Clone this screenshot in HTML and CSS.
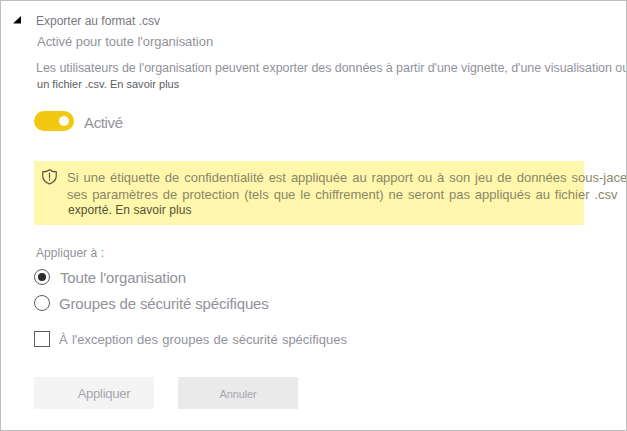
FILE: index.html
```html
<!DOCTYPE html>
<html lang="fr">
<head>
<meta charset="utf-8">
<title>Exporter au format .csv</title>
<link rel="stylesheet" href="styles.css">
</head>
<body>
<main class="panel">
  <header class="heading">
    <svg class="caret" width="8" height="8" viewBox="0 0 8 8"><path d="M8 0V7.500H.5V7Z" fill="#000"/></svg>
    <span class="title">Exporter au format .csv</span>
  </header>
  <p class="status"><span>Activé pour toute l'organisation</span></p>
  <p class="description"><span>Les utilisateurs de l'organisation peuvent exporter des données à partir d'une vignette, d'une visualisation ou</span></p>
  <p class="more"><span>un fichier .csv. En savoir plus</span></p>
  <div class="toggle-row">
    <div class="toggle"><i class="knob"></i></div>
    <span class="toggle-label">Activé</span>
  </div>
  <section class="notice">
    <svg class="shield" width="15" height="16" viewBox="0 0 16 17" fill="none" stroke="#4e4b3c" stroke-width="1.200"><path d="M8 .8C6 2.400 3.500 3 .8 3V7.500C.8 11.500 4 14.500 8 16C12 14.500 15.200 11.500 15.200 7.500V3C12.500 3 10 2.400 8 .8Z"/><path d="M8 4V10M8 11V12.300"/></svg>
    <div class="notice-text">
      <p class="n1"><span>Si une étiquette de confidentialité est appliquée au rapport ou à son jeu de données sous-jace</span></p>
      <p class="n2"><span>ses paramètres de protection (tels que le chiffrement) ne seront pas appliqués au fichier .csv</span></p>
      <p class="n3"><span>exporté. En savoir plus</span></p>
    </div>
  </section>
  <p class="apply-to"><span>Appliquer à :</span></p>
  <div class="option"><i class="radio checked"></i><span class="o1">Toute l'organisation</span></div>
  <div class="option second"><i class="radio"></i><span class="o2">Groupes de sécurité spécifiques</span></div>
  <div class="option except"><i class="checkbox"></i><span class="o3">À l'exception des groupes de sécurité spécifiques</span></div>
  <footer class="actions">
    <div class="button apply"><span>Appliquer</span></div>
    <div class="button cancel"><span>Annuler</span></div>
  </footer>
</main>
</body>
</html>
```
FILE: styles.css
```css
* { box-sizing: border-box; }
body { margin: 0; font-family: "Liberation Sans", Arial, sans-serif; background: #fff; }
p { margin: 0; }
.panel { width: 627px; height: 431px; overflow: hidden; border: 1px solid #bebebe; padding: 12px 0 0 33px; color: #92929a; font-size: 13px; line-height: 16px; white-space: nowrap; }
.heading { display: flex; height: 16px; margin-left: -21.5px; color: #77777f; font-size: 12px; }
.caret { margin: 3px 15.5px 0 0; }
.status { margin: 5px 0 0 3px; letter-spacing: -.04px; }
.description { margin: 10px 0 0 2px; font-size: 12.5px; letter-spacing: -.055px; }
.more { margin-left: 3px; font-size: 11px; letter-spacing: .02px; color: #5b5b60; }
.toggle-row { display: flex; align-items: center; height: 20px; margin-top: 19px; }
.toggle { width: 40px; height: 20px; border-radius: 10px; background: #f2c811; padding: 5px; display: flex; justify-content: flex-end; }
.knob { width: 10px; height: 10px; border-radius: 50%; background: #fff; }
.toggle-label { margin: 4px 0 0 10px; font-size: 15px; letter-spacing: -.35px; }
.notice { display: flex; width: 550px; height: 64px; margin-top: 30px; background: #fff7ac; color: #8a8668; }
.shield { flex: none; margin: 8px 0 0 8px; }
.notice-text { margin: 9px 0 0 10px; }
.n1 { word-spacing: 1.3px; }
.n2 { margin-top: 1px; word-spacing: 1.3px; }
.n3 { margin: -1px 0 0 1px; font-size: 12px; letter-spacing: .06px; color: #555239; }
.apply-to { margin: 20px 0 0 2px; font-size: 12px; letter-spacing: .05px; }
.option { display: flex; align-items: center; height: 24px; margin-top: 4px; font-size: 15px; }
.second { margin-top: 2px; }
.except { margin-top: 12px; font-size: 13px; }
.option span { margin: 2px 0 0 9px; }
.option .o1 { margin-left: 10px; letter-spacing: -.14px; }
.o2 { letter-spacing: -.15px; }
.o3 { word-spacing: .6px; }
.radio, .checkbox { flex: none; width: 16px; height: 16px; border: 1px solid #5c5c5c; }
.radio { border-radius: 50%; display: flex; align-items: center; justify-content: center; }
.checked::after { content: ""; width: 8px; height: 8px; border-radius: 50%; background: #2c2c2c; }
.actions { display: flex; gap: 24px; margin-top: 26px; }
.button { width: 120px; height: 32px; padding-top: 9px; text-align: center; background: #f4f4f4; color: #a8a6ac; }
.apply { padding-left: 20px; letter-spacing: -.25px; }
.cancel { background: #eaeaea; font-size: 11px; letter-spacing: -.1px; }
```
